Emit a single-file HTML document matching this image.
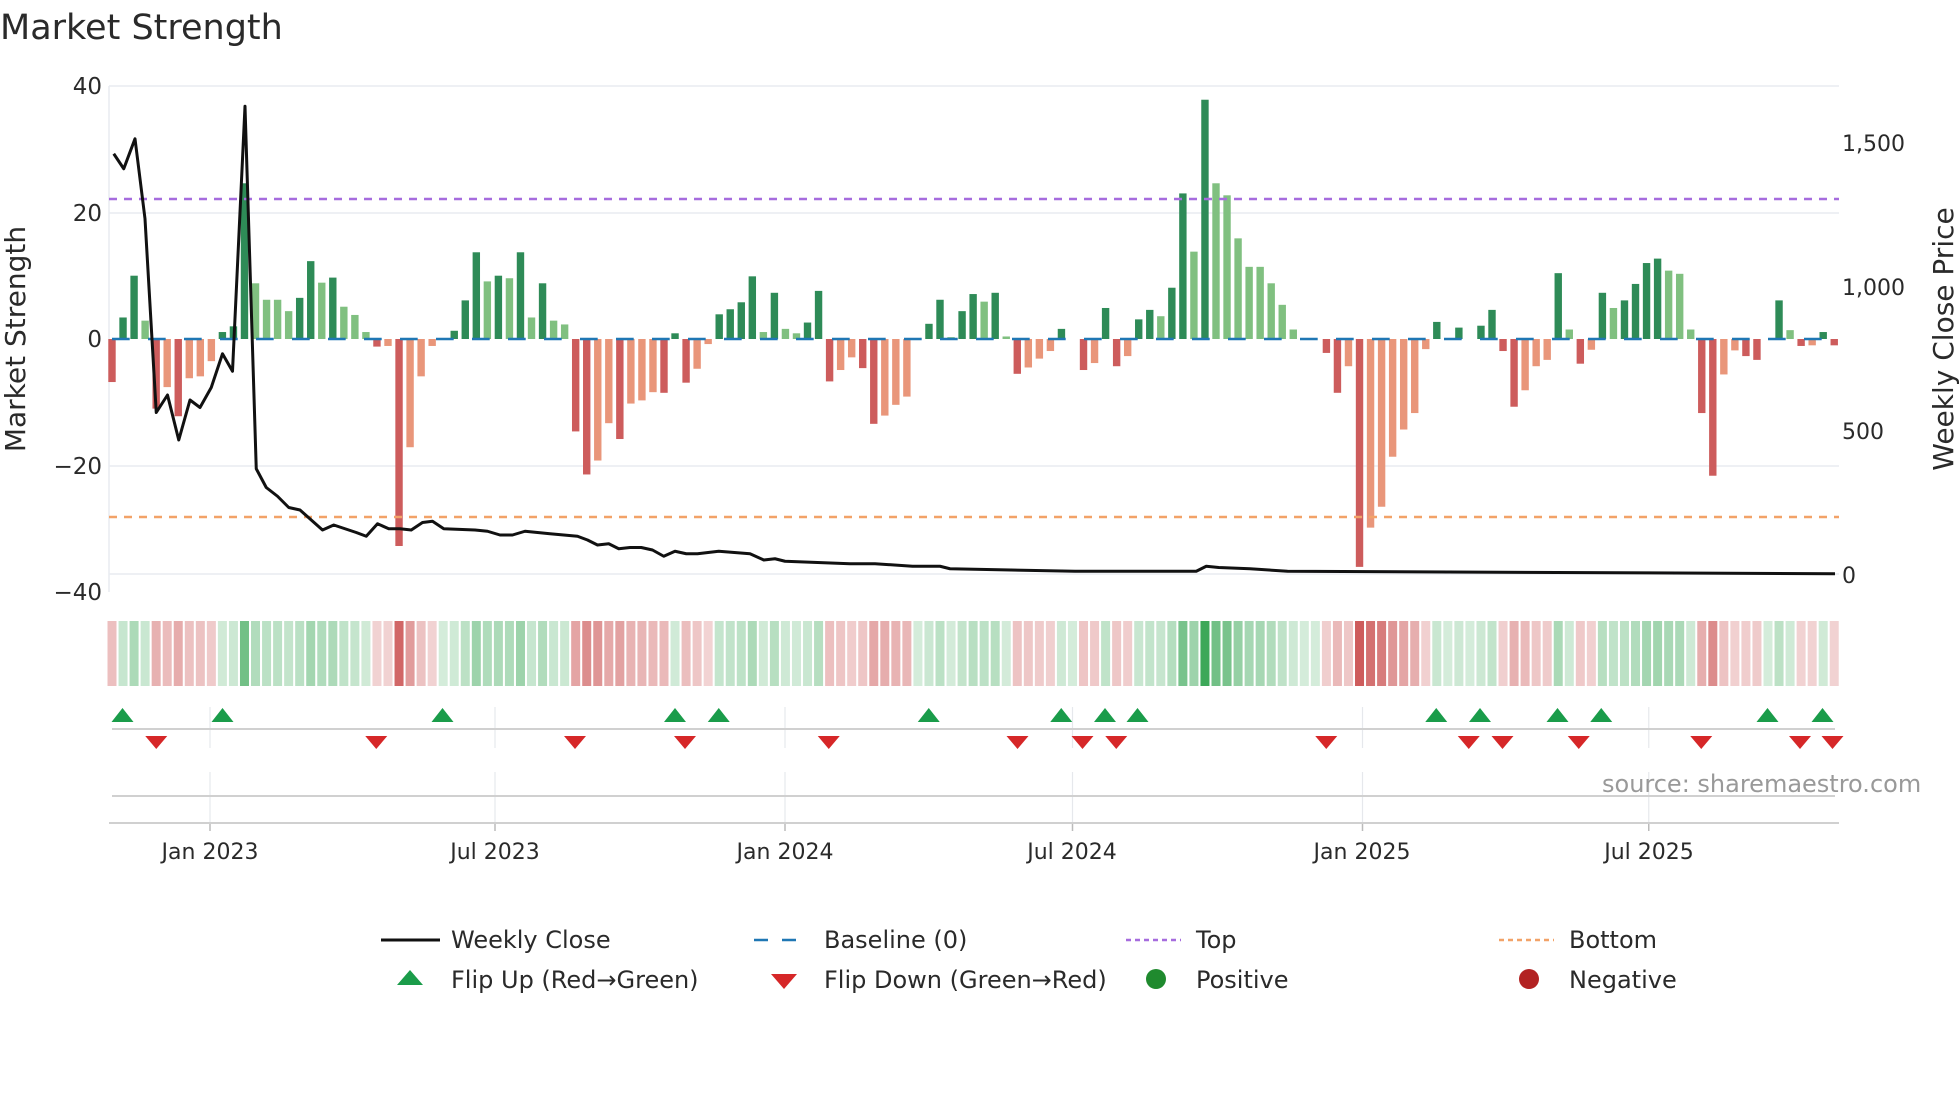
<!DOCTYPE html>
<html><head><meta charset="utf-8">
<style>
html,body{margin:0;padding:0;background:#fff;width:1960px;height:1102px;overflow:hidden}
svg{display:block}
text{font-family:"DejaVu Sans","Liberation Sans",sans-serif}
</style></head>
<body>
<svg id="s" xmlns="http://www.w3.org/2000/svg" width="1960" height="1102" viewBox="0 0 1960 1102">
<rect width="1960" height="1102" fill="#fff"/>
<text x="0" y="39" font-size="35" fill="#2a2a2a">Market Strength</text>
<g stroke="#e9ecf1" stroke-width="1.5">
<line x1="109" y1="86" x2="1839" y2="86"/>
<line x1="109" y1="213" x2="1839" y2="213"/>
<line x1="109" y1="466" x2="1839" y2="466"/>
<line x1="109" y1="574" x2="1839" y2="574"/>
<line x1="109" y1="86" x2="109" y2="592"/>
</g>
<g font-size="23" fill="#2a2a2a" text-anchor="end">
<text x="102" y="94">40</text>
<text x="102" y="221">20</text>
<text x="102" y="347">0</text>
<text x="102" y="474">−20</text>
<text x="102" y="600">−40</text>
</g>
<g font-size="22" fill="#2a2a2a">
<text x="1842" y="151">1,500</text>
<text x="1842" y="295">1,000</text>
<text x="1842" y="439">500</text>
<text x="1842" y="583">0</text>
</g>
<text transform="translate(25,339) rotate(-90)" font-size="28" fill="#2a2a2a" text-anchor="middle">Market Strength</text>
<text transform="translate(1953,339) rotate(-90)" font-size="28" fill="#2a2a2a" text-anchor="middle">Weekly Close Price</text>
<g id="bars"></g>
<line x1="109" y1="199" x2="1839" y2="199" stroke="#a66cde" stroke-width="2.5" stroke-dasharray="8,7"/>
<line x1="109" y1="517" x2="1839" y2="517" stroke="#f2a268" stroke-width="2.5" stroke-dasharray="8,7"/>
<line x1="112" y1="339" x2="1839" y2="339" stroke="#1f77b4" stroke-width="2.5" stroke-dasharray="17.7,18.3"/>
<g transform="scale(1.25)">
<polyline fill="none" stroke="#111" stroke-width="2.4" stroke-linejoin="round" points="91,123 99,135 108,111 116,175 125,330 134,316 143,352 152,320 160,326 169,310 178,283 186,297 196,85 205,375 213,390 222,397 231,406 240,408 249,416 258,424 267,420 276,423 285,426 293,429 302,419 311,423 320,423 329,424 338,418 346,417 355,423 380,424 390,425 400,428 410,428 420,425 440,427 462,429 470,432 478,436 487,435 495,439 504,438 513,438 522,440 531,445 540,441 549,443 558,443 575,441 600,443 611,448 620,447 628,449 680,451 700,451 730,453 752,453 760,455 860,457 950,457 957,457 965,453 975,454 1000,455 1030,457 1468,459"/>
</g>
<g id="heat"></g>
<g stroke="#e6e8ec" stroke-width="1.2" id="vg"></g>
<line x1="112" y1="729" x2="1835" y2="729" stroke="#d0d0d0" stroke-width="2"/>
<line x1="112" y1="796" x2="1835" y2="796" stroke="#d0d0d0" stroke-width="2"/>
<line x1="109" y1="823" x2="1839" y2="823" stroke="#d0d0d0" stroke-width="2"/>
<g id="mk"></g>
<text x="1602" y="792" font-size="24" fill="#999">source: sharemaestro.com</text>
<g font-size="22" fill="#2a2a2a" text-anchor="middle">
<text x="210" y="859">Jan 2023</text>
<text x="495" y="859">Jul 2023</text>
<text x="785" y="859">Jan 2024</text>
<text x="1072" y="859">Jul 2024</text>
<text x="1362" y="859">Jan 2025</text>
<text x="1649" y="859">Jul 2025</text>
</g>
<g font-size="24" fill="#2a2a2a">
<line x1="381" y1="940" x2="440" y2="940" stroke="#111" stroke-width="3"/>
<text x="451" y="948">Weekly Close</text>
<line x1="754" y1="940" x2="806" y2="940" stroke="#1f77b4" stroke-width="2.5" stroke-dasharray="14,14"/>
<text x="824" y="948">Baseline (0)</text>
<line x1="1126" y1="940" x2="1181" y2="940" stroke="#a66cde" stroke-width="2.5" stroke-dasharray="5,4"/>
<text x="1196" y="948">Top</text>
<line x1="1499" y1="940" x2="1554" y2="940" stroke="#f2a268" stroke-width="2.5" stroke-dasharray="5,4"/>
<text x="1569" y="948">Bottom</text>
<polygon points="410,970 423,985 397,985" fill="#1a9c4a"/>
<text x="451" y="988">Flip Up (Red→Green)</text>
<polygon points="771,974 797,974 784,989" fill="#d62728"/>
<text x="824" y="988">Flip Down (Green→Red)</text>
<circle cx="1156" cy="979" r="10" fill="#1f8a2e"/>
<text x="1196" y="988">Positive</text>
<circle cx="1529" cy="979" r="10" fill="#b22222"/>
<text x="1569" y="988">Negative</text>
</g>
</svg>
<script>
var raw="-6.8d,3.4d,10d,2.9l,-11d,-7.6l,-12.2d,-6.2l,-5.9l,-3.5l,1.1d,2d,24.6d,8.8l,6.2l,6.2l,4.4l,6.5d,12.3d,8.9l,9.7d,5.1l,3.8l,1.1l,-1.2d,-1.1l,-32.7d,-17.1l,-5.9l,-1.1l,0l,1.3d,6.1d,13.7d,9.1l,10d,9.6l,13.7d,3.4l,8.8d,2.9l,2.3l,-14.6d,-21.4d,-19.2l,-13.3l,-15.8d,-10.2l,-9.7l,-8.4l,-8.5d,0.9d,-6.9d,-4.7l,-0.8l,3.9d,4.7d,5.8d,9.9d,1.1l,7.3d,1.6l,0.9l,2.6d,7.6d,-6.7d,-4.9l,-2.9l,-4.6d,-13.4d,-12.1l,-10.4l,-9.1l,0l,2.4d,6.2d,0.3l,4.4d,7.1d,5.9l,7.3d,0.4l,-5.5d,-4.5l,-3.1l,-1.9l,1.6d,0l,-4.9d,-3.8l,4.9d,-4.3d,-2.7l,3.1d,4.6d,3.6l,8.1d,23d,13.8l,37.8d,24.6l,22.7l,15.9l,11.4l,11.4l,8.8l,5.4l,1.5l,0l,0l,-2.2d,-8.5d,-4.3l,-36d,-29.8l,-26.5l,-18.6l,-14.3l,-11.7l,-1.6l,2.7d,0l,1.8d,0l,2.1d,4.6d,-1.9d,-10.7d,-8.1l,-4.3l,-3.3l,10.4d,1.5l,-3.9d,-1.7l,7.3d,4.9l,6.1d,8.7d,12d,12.7d,10.8l,10.3l,1.5l,-11.7d,-21.6d,-5.6l,-1.8l,-2.7d,-3.3d,0l,6.1d,1.4l,-1.1d,-1l,1.1d,-1d";
var NS="http://www.w3.org/2000/svg";
function el(t,a,p){var e=document.createElementNS(NS,t);for(var k in a)e.setAttribute(k,a[k]);p.appendChild(e);return e;}
var bars=document.getElementById("bars"),heat=document.getElementById("heat");
raw.split(",").forEach(function(s,i){
 var d=s.slice(-1)=="d",v=parseFloat(s),x=112+i*11.04;
 var h=Math.abs(v)*6.33,y=v>=0?339-h:339;
 var c=v>=0?(d?"#2e8b57":"#80c080"):(d?"#cd5c5c":"#e9967a");
 if(h>0.5)el("rect",{x:x-3.7,y:y,width:7.4,height:h,fill:c},bars);
 var a=0.22+0.78*Math.min(Math.abs(v)/38,1);
 var hc=v>=0?"rgba(60,168,88,"+a+")":"rgba(205,90,90,"+(a+0.03)+")";
 el("rect",{x:x-4.5,y:621,width:9,height:65,fill:hc},heat);
});
var vg=document.getElementById("vg");
[168,396,628,858,1090,1319].forEach(function(vx){var x=vx*1.25;
 el("line",{x1:x,y1:707,x2:x,y2:748},vg);el("line",{x1:x,y1:772,x2:x,y2:823},vg);
 el("line",{x1:x,y1:823,x2:x,y2:831,stroke:"#bbb","stroke-width":1.5},vg);});
var mk=document.getElementById("mk");
[98,178,354,540,575,743,849,884,910,1149,1184,1246,1281,1414,1458].forEach(function(vx){var x=vx*1.25;
 el("polygon",{points:(x)+",708 "+(x+11)+",722 "+(x-11)+",722",fill:"#1a9c4a"},mk);});
[125,301,460,548,663,814,866,893,1061,1175,1202,1263,1361,1440,1466].forEach(function(vx){var x=vx*1.25;
 el("polygon",{points:(x-11)+",736 "+(x+11)+",736 "+x+",749",fill:"#d62728"},mk);});
</script>
</body></html>
